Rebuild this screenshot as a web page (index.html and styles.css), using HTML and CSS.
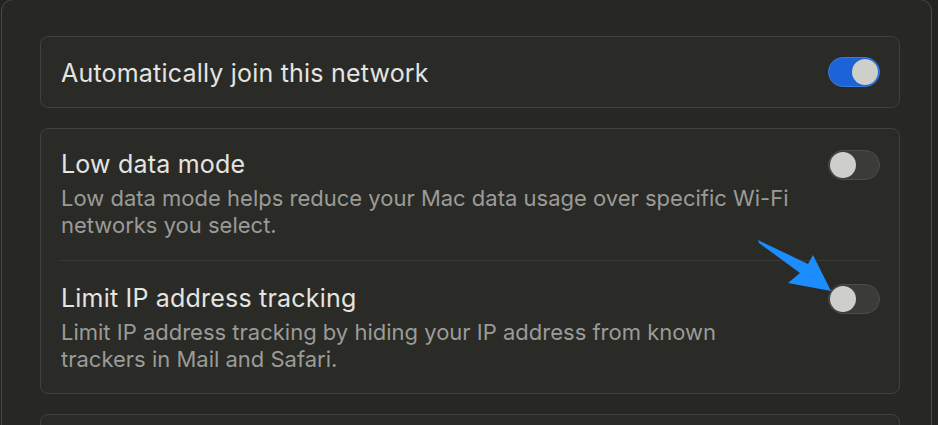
FILE: index.html
```html
<!DOCTYPE html>
<html>
<head>
<meta charset="utf-8">
<link rel="stylesheet" href="styles.css">
</head>
<body>
<div class="panel">
  <div class="card card-single">
    <span class="title">Automatically join this network</span>
    <span class="toggle on"><span class="knob"></span></span>
  </div>
  <div class="card card-group">
    <div class="row row-first">
      <div class="texts">
        <div class="title">Low data mode</div>
        <div class="desc">Low data mode helps reduce your Mac data usage over specific Wi-Fi networks you select.</div>
      </div>
      <span class="toggle"><span class="knob"></span></span>
    </div>
    <div class="row row-second">
      <div class="texts">
        <div class="title">Limit IP address tracking</div>
        <div class="desc">Limit IP address tracking by hiding your IP address from known trackers in Mail and Safari.</div>
      </div>
      <span class="toggle"><span class="knob"></span></span>
    </div>
  </div>
  <div class="card card-next"></div>
</div>
<svg class="arrow" width="90" height="70" viewBox="0 0 90 70">
  <polygon points="8,10 58,34 63,25 81,61 38,53 50,43 9,13" fill="#1b8dff"/>
</svg>
</body>
</html>
```
FILE: styles.css
```css
html, body {
  margin: 0;
  padding: 0;
  background: #242421;
  overflow: hidden;
  height: 425px;
}
body {
  position: relative;
  font-family: Inter, "Noto Sans", sans-serif;
}
.panel {
  margin-top: -1px;
  margin-left: 1px;
  width: 931px;
  height: 480px;
  background: #272723;
  border: 1px solid #4a4a46;
  border-radius: 12px;
  padding-top: 36px;
  box-sizing: border-box;
}
.card {
  margin-left: 38px;
  width: 860px;
  box-sizing: border-box;
  background: #2a2a26;
  border: 1px solid #41413d;
  border-radius: 8px;
}
.card-single {
  height: 72px;
  display: flex;
  align-items: center;
  justify-content: space-between;
  padding: 2px 19px 0 20px;
}
.card-group {
  margin-top: 20px;
  padding: 0 19px 0 19px;
}
.card-next {
  margin-top: 20px;
  height: 80px;
}
.title {
  color: #e4e4e1;
  font-size: 25px;
  line-height: 30px;
  letter-spacing: 0.2px;
}
.desc {
  color: #9b9b98;
  font-size: 22px;
  line-height: 27px;
  margin-top: 6px;
  letter-spacing: 0;
}
.row {
  display: flex;
  justify-content: space-between;
  align-items: flex-start;
}
.row-first {
  padding: 20px 0 21px 1px;
}
.row-second {
  border-top: 1px solid #3a3a36;
  padding: 22px 0 20px 1px;
}
.texts {
  width: 740px;
}
.toggle {
  flex: none;
  width: 52px;
  height: 30px;
  box-sizing: border-box;
  border-radius: 15px;
  background: #3b3b37;
  border: 1px solid #4d4d49;
  display: flex;
  align-items: center;
  padding: 0 1px;
}
.card-single .toggle {
  margin-top: -2px;
}
.row .toggle {
  margin-top: 1px;
}
.toggle.on {
  background: #1c63d8;
  border-color: #3d7ae0;
  justify-content: flex-end;
}
.knob {
  width: 26px;
  height: 26px;
  border-radius: 50%;
  background: #cececb;
}
.arrow {
  position: absolute;
  left: 750px;
  top: 230px;
}
```
